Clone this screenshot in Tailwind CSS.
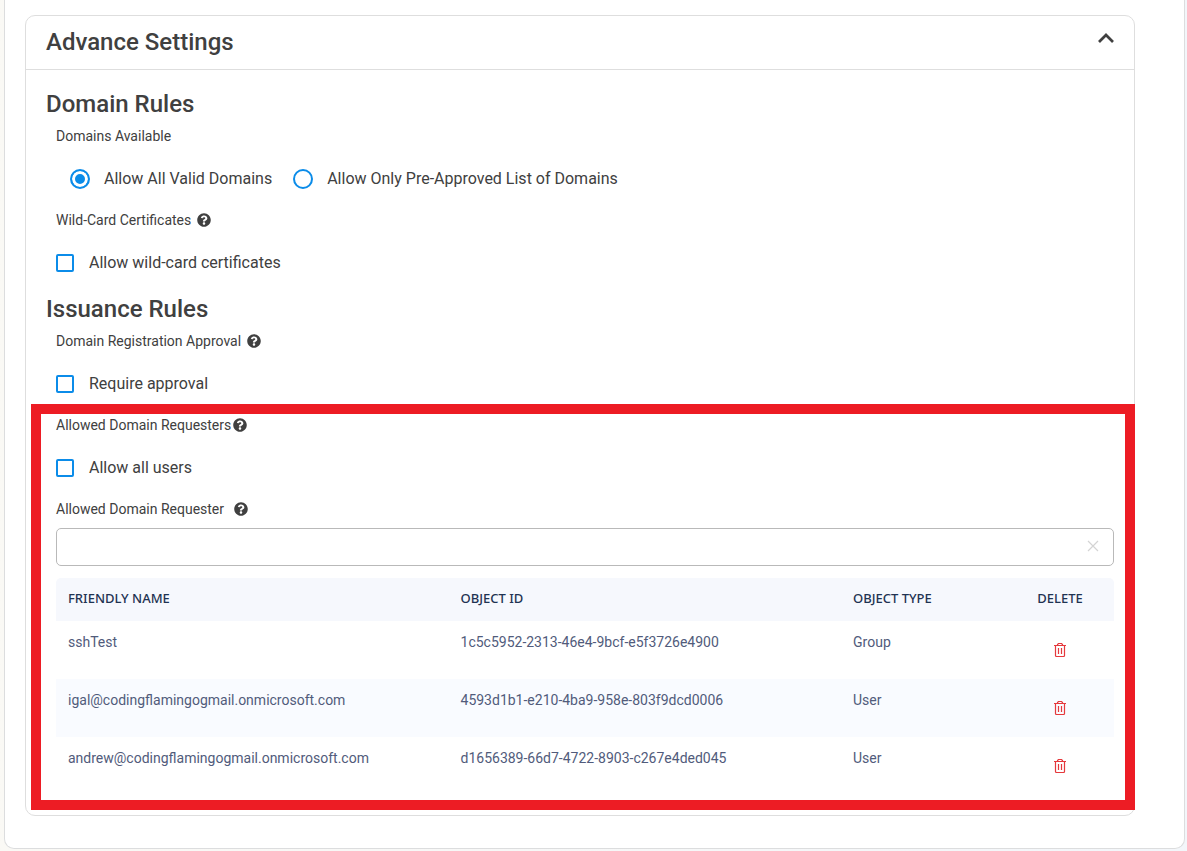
<!DOCTYPE html>
<html lang="en">
<head>
<meta charset="utf-8">
<meta name="viewport" content="width=device-width, initial-scale=1">
<title>Advance Settings</title>
<script src="https://cdn.jsdelivr.net/npm/@tailwindcss/browser@4"></script>
</head>
<body class="bg-linear-to-r from-[#faf9f5] to-[#f3f6fa] font-['Roboto',sans-serif] text-[#404040]">
<svg class="hidden" aria-hidden="true">
  <symbol id="help" viewBox="0 0 512 512"><path fill="currentColor" d="M504 256c0 137-111 248-248 248S8 393 8 256 119 8 256 8s248 111 248 248zM262.700 90c-54.500 0-89.300 23-116.500 63.800-3.500 5.300-2.400 12.400 2.700 16.300l34.700 26.300c5.200 3.900 12.600 3 16.700-2.100 17.900-22.700 30.100-35.800 57.300-35.800 20.400 0 45.700 13.100 45.700 33 0 15-12.400 22.700-32.500 34C247.100 238.500 216 254.900 216 296v4c0 6.600 5.400 12 12 12h56c6.600 0 12-5.400 12-12v-1.300c0-28.500 83.200-29.600 83.200-106.700 0-58-60.200-102-116.500-102zM256 338c-25.400 0-46 20.600-46 46s20.600 46 46 46 46-20.600 46-46-20.600-46-46-46z"/></symbol>
  <symbol id="trash" viewBox="0 0 12 14"><g fill="none" stroke="currentColor" stroke-width="1.200"><path d="M0 2.500h12M3.500 2.500v-1l1-1h3l1 1v1M1.500 2.500v10l.5 1h8l.5-1v-10M4.500 5v6M7.500 5v6"/></g></symbol>
</svg>
<main class="ml-1 mr-0.5 rounded-b-[10px] border border-t-0 border-[#dcddde] bg-white pt-[15px] pr-[49px] pb-8 pl-5">
  <section class="relative rounded-[10px] border border-[#dedede]">
    <header class="flex items-center justify-between border-b border-[#dedede] px-5 pt-2.5 pb-[11px]">
      <h2 class="text-2xl font-medium">Advance Settings</h2>
      <button type="button" aria-label="Collapse section" class="mb-2 block"><svg class="h-4 w-4" viewBox="0 0 16 16" fill="none" stroke="currentColor" stroke-width="2.700"><path d="M1 12l7-7 7 7"/></svg></button>
    </header>
    <div class="px-5 pt-[18px] pb-5">
      <h2 class="mb-1.5 text-2xl font-medium">Domain Rules</h2>
      <fieldset class="pl-2.5">
        <legend class="mb-[21px] text-sm">Domains Available</legend>
        <div class="flex flex-wrap gap-[21px] pl-3.5">
          <label class="flex items-center gap-3.5"><input type="radio" name="domains" checked class="h-5 w-5 appearance-none rounded-full border-2 border-[#0b8ce9] checked:bg-[#0b8ce9] checked:shadow-[inset_0_0_0_3px_white]">Allow All Valid Domains</label>
          <label class="flex items-center gap-3.5"><input type="radio" name="domains" class="h-5 w-5 appearance-none rounded-full border-2 border-[#0b8ce9] checked:bg-[#0b8ce9] checked:shadow-[inset_0_0_0_3px_white]">Allow Only Pre-Approved List of Domains</label>
        </div>
      </fieldset>
      <div class="mt-[19px] pl-2.5">
        <p class="flex items-center gap-1.5 text-sm">Wild-Card Certificates <svg class="h-3.5 w-3.5"><use href="#help"/></svg></p>
        <label class="mt-[21px] flex items-center gap-[15px]"><input type="checkbox" class="h-[18px] w-[18px] appearance-none rounded-xs border-2 border-[#0b8ce9] checked:bg-[#0b8ce9]">Allow wild-card certificates</label>
      </div>
      <h2 class="mt-[18px] mb-1.5 text-2xl font-medium">Issuance Rules</h2>
      <div class="pl-2.5">
        <p class="flex items-center gap-1.5 text-sm">Domain Registration Approval <svg class="h-3.5 w-3.5"><use href="#help"/></svg></p>
        <label class="mt-[21px] flex items-center gap-[15px]"><input type="checkbox" class="h-[18px] w-[18px] appearance-none rounded-xs border-2 border-[#0b8ce9] checked:bg-[#0b8ce9]">Require approval</label>
      </div>
      <div class="mt-[19px] pl-2.5">
        <p class="flex items-center gap-0.5 text-sm">Allowed Domain Requesters<svg class="h-3.5 w-3.5"><use href="#help"/></svg></p>
        <label class="mt-[21px] flex items-center gap-[15px]"><input type="checkbox" class="h-[18px] w-[18px] appearance-none rounded-xs border-2 border-[#0b8ce9] checked:bg-[#0b8ce9]">Allow all users</label>
        <div class="mt-[19px] flex items-center gap-2.5 text-sm"><label for="requester">Allowed Domain Requester</label><svg class="h-3.5 w-3.5"><use href="#help"/></svg></div>
        <div class="mt-[9px] flex h-[38px] items-center rounded-[5px] border border-[#b9b9b9] pr-3.5">
          <input id="requester" type="text" class="h-full min-w-0 flex-1 px-3 outline-none">
          <button type="button" aria-label="Clear" class="mb-0.5"><svg class="h-3 w-3 text-[#d4d4d4]" viewBox="0 0 12 12" fill="none" stroke="currentColor" stroke-width="1.200"><path d="M1 1l10 10M11 1L1 11"/></svg></button>
        </div>
        <table class="mt-3 w-full table-fixed text-left text-sm text-[#515b7b]">
          <colgroup><col class="w-[37.1%]"><col class="w-[37.1%]"><col><col class="w-[10.2%]"></colgroup>
          <thead class="font-['Noto_Sans',sans-serif] text-[13px] leading-5 text-[#1f3352]">
            <tr class="h-[43px] bg-[#f6f8fd]"><th class="rounded-tl-[5px] px-3 pb-1 font-medium">FRIENDLY NAME</th><th class="px-3 pb-1 font-medium">OBJECT ID</th><th class="px-3 pb-1 font-medium">OBJECT TYPE</th><th class="rounded-tr-[5px] pb-1 text-center font-medium">DELETE</th></tr>
          </thead>
          <tbody>
            <tr class="h-[58px] even:bg-[#f9fbff]"><td class="px-3 pt-[11px] align-top">sshTest</td><td class="px-3 pt-[11px] align-top">1c5c5952-2313-46e4-9bcf-e5f3726e4900</td><td class="px-3 pt-[11px] align-top">Group</td><td><button type="button" aria-label="Delete sshTest" class="mx-auto block text-[#e5393d]"><svg class="h-3.5 w-3"><use href="#trash"/></svg></button></td></tr>
            <tr class="h-[58px] even:bg-[#f9fbff]"><td class="px-3 pt-[11px] align-top">igal@codingflamingogmail.onmicrosoft.com</td><td class="px-3 pt-[11px] align-top">4593d1b1-e210-4ba9-958e-803f9dcd0006</td><td class="px-3 pt-[11px] align-top">User</td><td><button type="button" aria-label="Delete igal" class="mx-auto block text-[#e5393d]"><svg class="h-3.5 w-3"><use href="#trash"/></svg></button></td></tr>
            <tr class="h-[58px] even:bg-[#f9fbff]"><td class="px-3 pt-[11px] align-top">andrew@codingflamingogmail.onmicrosoft.com</td><td class="px-3 pt-[11px] align-top">d1656389-66d7-4722-8903-c267e4ded045</td><td class="px-3 pt-[11px] align-top">User</td><td><button type="button" aria-label="Delete andrew" class="mx-auto block text-[#e5393d]"><svg class="h-3.5 w-3"><use href="#trash"/></svg></button></td></tr>
          </tbody>
        </table>
      </div>
    </div>
    <!-- Highlight frame over the requester settings -->
    <div class="pointer-events-none absolute top-[388px] -right-px bottom-[5px] left-[5px] border-10 border-[#ed1c24]"></div>
  </section>
</main>
</body>
</html>
